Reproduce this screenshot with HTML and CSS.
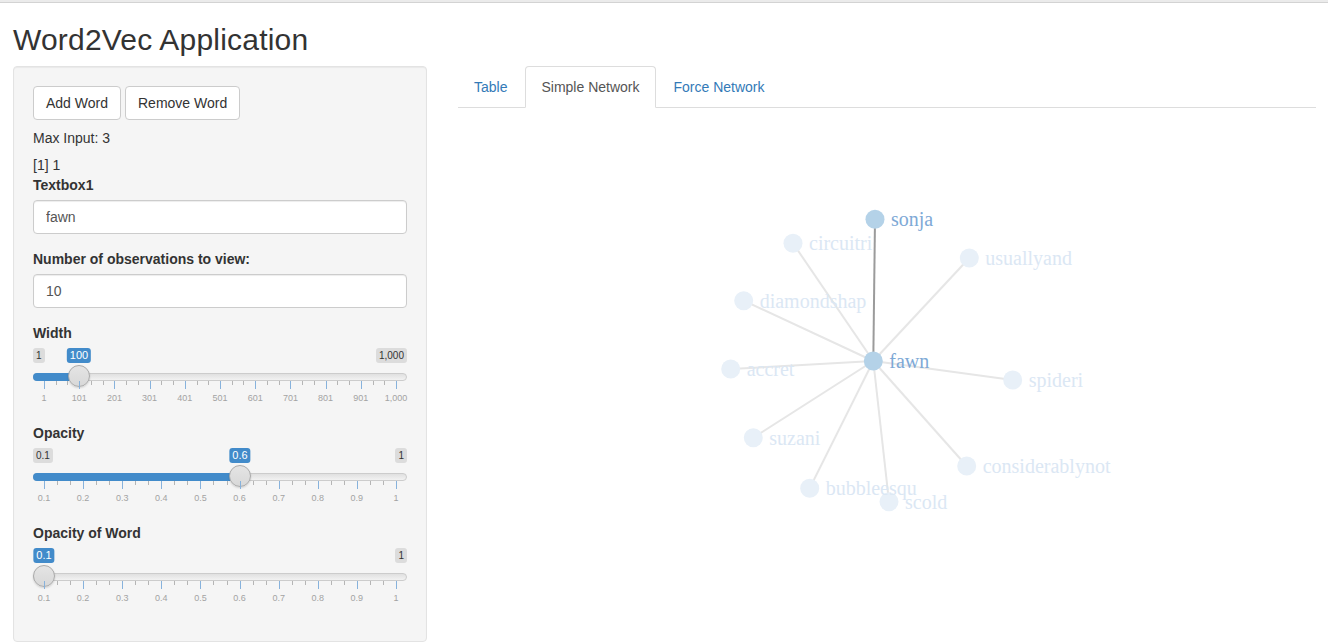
FILE: index.html
```html
<!DOCTYPE html>
<html>
<head>
<meta charset="utf-8">
<title>Word2Vec Application</title>
<link rel="stylesheet" href="styles.css">
</head>
<body>
<div class="topline"></div>
<div class="container">
  <h2 class="title">Word2Vec Application</h2>
  <div class="row">
    <div class="sidebar">
      <div class="well">
        <div class="btns">
          <button class="btn">Add Word</button>
          <button class="btn">Remove Word</button>
        </div>
        <div class="maxinput">Max Input: 3</div>
        <div class="out">[1] 1</div>
        <div class="form-group">
          <label class="control-label">Textbox1</label>
          <input class="form-control" type="text" value="fawn">
        </div>
        <div class="form-group">
          <label class="control-label">Number of observations to view:</label>
          <input class="form-control" type="text" value="10">
        </div>

        <div class="form-group">
          <label class="control-label">Width</label>
          <div class="irs">
            <span class="irs-min">1</span>
            <span class="irs-max">1,000</span>
            <span class="irs-line"></span>
            <span class="irs-bar" style="width:46px"></span>
            <span class="irs-single" style="left:46px">100</span>
            <span class="irs-slider" style="left:35px"></span>
            <div class="irs-grid">
              <span class="pol" style="left:0%"></span><span class="pol small" style="left:3.333%"></span><span class="pol small" style="left:6.667%"></span>
              <span class="pol" style="left:10%"></span><span class="pol small" style="left:13.333%"></span><span class="pol small" style="left:16.667%"></span>
              <span class="pol" style="left:20%"></span><span class="pol small" style="left:23.333%"></span><span class="pol small" style="left:26.667%"></span>
              <span class="pol" style="left:30%"></span><span class="pol small" style="left:33.333%"></span><span class="pol small" style="left:36.667%"></span>
              <span class="pol" style="left:40%"></span><span class="pol small" style="left:43.333%"></span><span class="pol small" style="left:46.667%"></span>
              <span class="pol" style="left:50%"></span><span class="pol small" style="left:53.333%"></span><span class="pol small" style="left:56.667%"></span>
              <span class="pol" style="left:60%"></span><span class="pol small" style="left:63.333%"></span><span class="pol small" style="left:66.667%"></span>
              <span class="pol" style="left:70%"></span><span class="pol small" style="left:73.333%"></span><span class="pol small" style="left:76.667%"></span>
              <span class="pol" style="left:80%"></span><span class="pol small" style="left:83.333%"></span><span class="pol small" style="left:86.667%"></span>
              <span class="pol" style="left:90%"></span><span class="pol small" style="left:93.333%"></span><span class="pol small" style="left:96.667%"></span>
              <span class="pol" style="left:100%"></span>
              <span class="gtext" style="left:0%">1</span>
              <span class="gtext" style="left:10%">101</span>
              <span class="gtext" style="left:20%">201</span>
              <span class="gtext" style="left:30%">301</span>
              <span class="gtext" style="left:40%">401</span>
              <span class="gtext" style="left:50%">501</span>
              <span class="gtext" style="left:60%">601</span>
              <span class="gtext" style="left:70%">701</span>
              <span class="gtext" style="left:80%">801</span>
              <span class="gtext" style="left:90%">901</span>
              <span class="gtext" style="left:100%">1,000</span>
            </div>
          </div>
        </div>

        <div class="form-group">
          <label class="control-label">Opacity</label>
          <div class="irs">
            <span class="irs-min">0.1</span>
            <span class="irs-max">1</span>
            <span class="irs-line"></span>
            <span class="irs-bar" style="width:207px"></span>
            <span class="irs-single" style="left:207px">0.6</span>
            <span class="irs-slider" style="left:196px"></span>
            <div class="irs-grid">
              <span class="pol" style="left:0%"></span><span class="pol small" style="left:3.704%"></span><span class="pol small" style="left:7.407%"></span>
              <span class="pol" style="left:11.111%"></span><span class="pol small" style="left:14.815%"></span><span class="pol small" style="left:18.519%"></span>
              <span class="pol" style="left:22.222%"></span><span class="pol small" style="left:25.926%"></span><span class="pol small" style="left:29.630%"></span>
              <span class="pol" style="left:33.333%"></span><span class="pol small" style="left:37.037%"></span><span class="pol small" style="left:40.741%"></span>
              <span class="pol" style="left:44.444%"></span><span class="pol small" style="left:48.148%"></span><span class="pol small" style="left:51.852%"></span>
              <span class="pol" style="left:55.556%"></span><span class="pol small" style="left:59.259%"></span><span class="pol small" style="left:62.963%"></span>
              <span class="pol" style="left:66.667%"></span><span class="pol small" style="left:70.370%"></span><span class="pol small" style="left:74.074%"></span>
              <span class="pol" style="left:77.778%"></span><span class="pol small" style="left:81.481%"></span><span class="pol small" style="left:85.185%"></span>
              <span class="pol" style="left:88.889%"></span><span class="pol small" style="left:92.593%"></span><span class="pol small" style="left:96.296%"></span>
              <span class="pol" style="left:100%"></span>
              <span class="gtext" style="left:0%">0.1</span>
              <span class="gtext" style="left:11.111%">0.2</span>
              <span class="gtext" style="left:22.222%">0.3</span>
              <span class="gtext" style="left:33.333%">0.4</span>
              <span class="gtext" style="left:44.444%">0.5</span>
              <span class="gtext" style="left:55.556%">0.6</span>
              <span class="gtext" style="left:66.667%">0.7</span>
              <span class="gtext" style="left:77.778%">0.8</span>
              <span class="gtext" style="left:88.889%">0.9</span>
              <span class="gtext" style="left:100%">1</span>
            </div>
          </div>
        </div>

        <div class="form-group">
          <label class="control-label">Opacity of Word</label>
          <div class="irs">
            <span class="irs-max">1</span>
            <span class="irs-line"></span>
            <span class="irs-single" style="left:11px">0.1</span>
            <span class="irs-slider" style="left:0px"></span>
            <div class="irs-grid">
              <span class="pol" style="left:0%"></span><span class="pol small" style="left:3.704%"></span><span class="pol small" style="left:7.407%"></span>
              <span class="pol" style="left:11.111%"></span><span class="pol small" style="left:14.815%"></span><span class="pol small" style="left:18.519%"></span>
              <span class="pol" style="left:22.222%"></span><span class="pol small" style="left:25.926%"></span><span class="pol small" style="left:29.630%"></span>
              <span class="pol" style="left:33.333%"></span><span class="pol small" style="left:37.037%"></span><span class="pol small" style="left:40.741%"></span>
              <span class="pol" style="left:44.444%"></span><span class="pol small" style="left:48.148%"></span><span class="pol small" style="left:51.852%"></span>
              <span class="pol" style="left:55.556%"></span><span class="pol small" style="left:59.259%"></span><span class="pol small" style="left:62.963%"></span>
              <span class="pol" style="left:66.667%"></span><span class="pol small" style="left:70.370%"></span><span class="pol small" style="left:74.074%"></span>
              <span class="pol" style="left:77.778%"></span><span class="pol small" style="left:81.481%"></span><span class="pol small" style="left:85.185%"></span>
              <span class="pol" style="left:88.889%"></span><span class="pol small" style="left:92.593%"></span><span class="pol small" style="left:96.296%"></span>
              <span class="pol" style="left:100%"></span>
              <span class="gtext" style="left:0%">0.1</span>
              <span class="gtext" style="left:11.111%">0.2</span>
              <span class="gtext" style="left:22.222%">0.3</span>
              <span class="gtext" style="left:33.333%">0.4</span>
              <span class="gtext" style="left:44.444%">0.5</span>
              <span class="gtext" style="left:55.556%">0.6</span>
              <span class="gtext" style="left:66.667%">0.7</span>
              <span class="gtext" style="left:77.778%">0.8</span>
              <span class="gtext" style="left:88.889%">0.9</span>
              <span class="gtext" style="left:100%">1</span>
            </div>
          </div>
        </div>
      </div>
    </div>

    <div class="main">
      <ul class="nav-tabs">
        <li><a class="tab">Table</a></li>
        <li><a class="tab active">Simple Network</a></li>
        <li><a class="tab">Force Network</a></li>
      </ul>
      <div class="tab-content">
        <svg class="network" width="858" height="530">
          <g class="links">
            <line class="link faded" x1="415.3" y1="253" x2="335" y2="135.3"/>
            <line class="link faded" x1="415.3" y1="253" x2="511.3" y2="150"/>
            <line class="link faded" x1="415.3" y1="253" x2="285.7" y2="192.7"/>
            <line class="link faded" x1="415.3" y1="253" x2="272.7" y2="261"/>
            <line class="link faded" x1="415.3" y1="253" x2="554.7" y2="272"/>
            <line class="link faded" x1="415.3" y1="253" x2="295.3" y2="329.7"/>
            <line class="link faded" x1="415.3" y1="253" x2="508.7" y2="358"/>
            <line class="link faded" x1="415.3" y1="253" x2="351.7" y2="380.3"/>
            <line class="link faded" x1="415.3" y1="253" x2="431" y2="393.7"/>
            <line class="link strong" x1="415.3" y1="253" x2="417" y2="111.3"/>
          </g>
          <g class="nodes">
            <circle class="node faded" cx="335" cy="135.3" r="9.5"/>
            <circle class="node faded" cx="511.3" cy="150" r="9.5"/>
            <circle class="node faded" cx="285.7" cy="192.7" r="9.5"/>
            <circle class="node faded" cx="272.7" cy="261" r="9.5"/>
            <circle class="node faded" cx="554.7" cy="272" r="9.5"/>
            <circle class="node faded" cx="295.3" cy="329.7" r="9.5"/>
            <circle class="node faded" cx="508.7" cy="358" r="9.5"/>
            <circle class="node faded" cx="351.7" cy="380.3" r="9.5"/>
            <circle class="node faded" cx="431" cy="393.7" r="9.5"/>
            <circle class="node main" cx="417" cy="111.3" r="9.5"/>
            <circle class="node main" cx="415.3" cy="253" r="9.5"/>
          </g>
          <g class="labels">
            <text class="label faded" x="351" y="135.3" dy=".35em">circuitri</text>
            <text class="label faded" x="527.3" y="150" dy=".35em">usuallyand</text>
            <text class="label faded" x="301.7" y="192.7" dy=".35em">diamondshap</text>
            <text class="label faded" x="288.7" y="261" dy=".35em">accret</text>
            <text class="label faded" x="570.7" y="272" dy=".35em">spideri</text>
            <text class="label faded" x="311.3" y="329.7" dy=".35em">suzani</text>
            <text class="label faded" x="524.7" y="358" dy=".35em">considerablynot</text>
            <text class="label faded" x="367.7" y="380.3" dy=".35em">bubbleesqu</text>
            <text class="label faded" x="447" y="393.7" dy=".35em">scold</text>
            <text class="label main" x="433" y="111.3" dy=".35em">sonja</text>
            <text class="label main" x="431.3" y="253" dy=".35em">fawn</text>
          </g>
        </svg>
      </div>
    </div>
  </div>
</div>
</body>
</html>
```

FILE: styles.css
```css
* { box-sizing: border-box; }

html, body {
  margin: 0;
  padding: 0;
  background: #fff;
}

body {
  font-family: "Liberation Sans", Arial, Helvetica, sans-serif;
  font-size: 14px;
  line-height: 20px;
  color: #333;
  overflow: hidden;
}

.topline {
  height: 3px;
  background: #ebebeb;
  border-bottom: 1px solid #d3d3d3;
}

.container {
  padding: 0 12px 0 13px;
}

.title {
  font-size: 30px;
  font-weight: 400;
  line-height: 33px;
  letter-spacing: 0.2px;
  margin: 20px 0 10px 0;
  color: #333;
}

.row {
  display: grid;
  grid-template-columns: 414px 1fr;
  column-gap: 31px;
  align-items: start;
}

/* ---------- sidebar ---------- */
.well {
  background: #f5f5f5;
  border: 1px solid #e3e3e3;
  border-radius: 4px;
  box-shadow: inset 0 1px 1px rgba(0,0,0,0.05);
  padding: 19px 19px 18px 19px;
}

.btns {
  display: flex;
  gap: 4px;
}

.btn {
  font-family: inherit;
  font-size: 14px;
  line-height: 20px;
  color: #333;
  background: #fff;
  border: 1px solid #ccc;
  border-radius: 4px;
  padding: 6px 12px;
  height: 34px;
}

.maxinput {
  margin-top: 8px;
}

.out {
  margin-top: 7px;
}

.form-group {
  margin-bottom: 15px;
}

.control-label {
  display: inline-block;
  font-weight: 700;
  margin-bottom: 5px;
}

.form-control {
  display: block;
  width: 100%;
  height: 34px;
  padding: 6px 12px;
  font-family: inherit;
  font-size: 14px;
  line-height: 20px;
  color: #555;
  background: #fff;
  border: 1px solid #ccc;
  border-radius: 4px;
  box-shadow: inset 0 1px 1px rgba(0,0,0,0.075);
}

/* ---------- range slider ---------- */
.irs {
  position: relative;
  height: 60px;
  font-family: "Liberation Sans", Arial, sans-serif;
}

.irs-min, .irs-max, .irs-single {
  position: absolute;
  top: 0;
  font-size: 10px;
  line-height: 13px;
  padding: 1px 3px;
  border-radius: 3px;
  white-space: nowrap;
}

.irs-min, .irs-max {
  color: #333;
  background: rgba(0,0,0,0.1);
}

.irs-min { left: 0; }
.irs-max { right: 0; }

.irs-single {
  font-size: 11px;
  color: #fff;
  background: #428bca;
  transform: translateX(-50%);
}

.irs-line {
  position: absolute;
  left: 0;
  right: 0;
  top: 25px;
  height: 8px;
  border: 1px solid #ccc;
  border-radius: 8px;
  background: linear-gradient(to bottom, #e0e0e0 0%, #f2f2f2 100%);
}

.irs-bar {
  position: absolute;
  left: 0;
  top: 25px;
  height: 8px;
  background: #428bca;
  border-radius: 8px 0 0 8px;
}

.irs-slider {
  position: absolute;
  top: 17px;
  width: 22px;
  height: 22px;
  border-radius: 50%;
  border: 1px solid #aaa;
  background: linear-gradient(to bottom, #e4e4e4 0%, #d8d8d8 100%);
  box-shadow: 0 1px 2px rgba(0,0,0,0.15);
}

.irs-grid {
  position: absolute;
  left: 11px;
  right: 11px;
  top: 33px;
  height: 27px;
}

.pol {
  position: absolute;
  top: 0;
  width: 1px;
  height: 8px;
  background: #87b2dc;
}

.pol.small {
  height: 4px;
  background: #b5b5b5;
}

.gtext {
  position: absolute;
  top: 11px;
  font-size: 9px;
  line-height: 12px;
  color: #a3a3a3;
  transform: translateX(-50%);
  white-space: nowrap;
}

/* ---------- main panel ---------- */
.nav-tabs {
  list-style: none;
  margin: 0;
  padding: 0;
  display: flex;
  border-bottom: 1px solid #ddd;
}

.nav-tabs li {
  margin-bottom: -1px;
  margin-right: 2px;
}

.tab {
  display: block;
  padding: 10px 15px;
  line-height: 20px;
  color: #337ab7;
  border: 1px solid transparent;
  border-radius: 4px 4px 0 0;
  text-decoration: none;
}

.tab.active {
  color: #555;
  background: #fff;
  border-color: #ddd #ddd transparent #ddd;
}

.tab-content {
  display: block;
}

.network {
  display: block;
}

.link {
  stroke-width: 2;
}

.link.faded { stroke: #e6e6e6; }
.link.strong { stroke: #9b9b9b; }

.node.faded { fill: #e8f0f8; }
.node.main { fill: #b4d2e8; }

.label {
  font-family: "Liberation Serif", "Times New Roman", serif;
  font-size: 20px;
}

.label.faded { fill: #dbe7f4; }
.label.main { fill: #7ea9d6; }
```
